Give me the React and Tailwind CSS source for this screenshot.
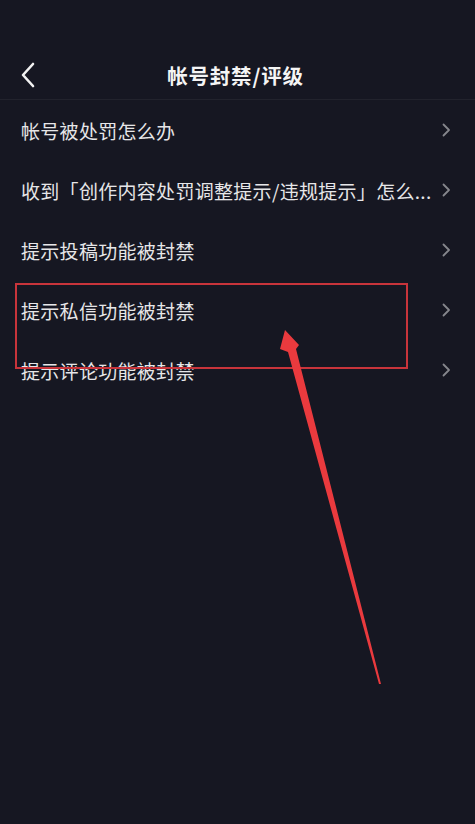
import React from "react";

// row 2 is shown cut short, the way the screen shows it
const items = [
  "帐号被处罚怎么办",
  "收到「创作内容处罚调整提示/违规提示」怎么...",
  "提示投稿功能被封禁",
  "提示私信功能被封禁",
  "提示评论功能被封禁",
];

const Chevron = () => (
  <svg width="10" height="16" viewBox="0 0 10 16" className="shrink-0">
    <path d="M2.5 2.5 L8 8 L2.5 13.5" fill="none" stroke="#85868c" strokeWidth="1.8" strokeLinecap="round" strokeLinejoin="round" />
  </svg>
);

const App = () => {
  return (
    <div
      className="relative w-[475px] h-[824px] overflow-hidden bg-[#161722] text-white"
      style={{ fontFamily: '"Noto Sans CJK SC", "Noto Sans", sans-serif' }}
    >
      {/* header */}
      <div className="h-[100px] pt-[50px] border-b border-[#22232d] flex items-center px-5">
        <svg width="16" height="26" viewBox="0 0 16 26" className="shrink-0">
          <path d="M13 2 L3 13 L13 24" fill="none" stroke="#f2f2f2" strokeWidth="2.6" strokeLinecap="round" strokeLinejoin="round" />
        </svg>
        <div className="flex-1 text-center text-[20.5px] font-bold tracking-[0.8px] leading-[28px] text-[#f5f5f5] pr-[4px]">
          帐号封禁/评级
        </div>
        <div className="w-4" />
      </div>

      {/* list */}
      <div className="flex flex-col">
        {items.map((t) => (
          <div key={t} className="h-[60px] flex items-center pl-[21px] pr-[24px] gap-2">
            <span className="flex-1 min-w-0 whitespace-nowrap overflow-hidden text-[19px] tracking-[0.3px] leading-[26px] text-[#e6e6e8] pt-[2px]">
              {t}
            </span>
            <Chevron />
          </div>
        ))}
      </div>

      {/* annotation box */}
      <div className="absolute left-[15px] top-[283px] w-[393px] h-[86px] border-2 border-[#c8343b]" />

      {/* annotation arrow */}
      <svg className="absolute left-0 top-0" width="475" height="824" viewBox="0 0 475 824">
        <polygon
          points="285,330 299,345 296,349 381,684 379,684 288,352 280,349"
          fill="#ea3a3e"
        />
      </svg>
    </div>
  );
};

export default App;
